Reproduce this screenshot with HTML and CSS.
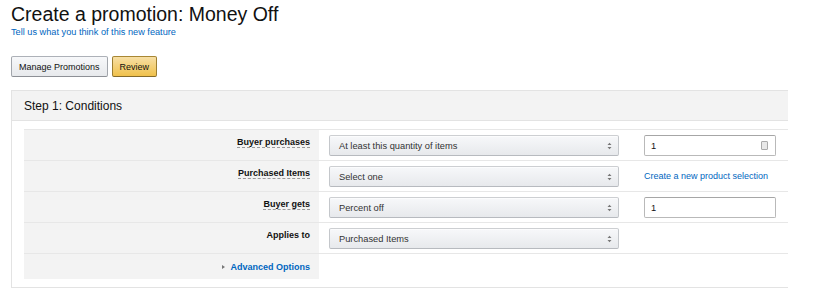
FILE: index.html
```html
<!DOCTYPE html>
<html>
<head>
<meta charset="utf-8">
<link rel="stylesheet" href="styles.css">
</head>
<body>
<div class="page">
  <h1 class="title">Create a promotion: Money Off</h1>
  <a class="feedback" href="#">Tell us what you think of this new feature</a>
  <div class="actions">
    <button class="btn">Manage Promotions</button>
    <button class="btn btn-primary">Review</button>
  </div>
  <section class="panel">
    <div class="panel-head">Step 1: Conditions</div>
    <div class="panel-body">
      <div class="form">
        <div class="row">
          <div class="label"><span class="hint">Buyer purchases</span></div>
          <div class="field">
            <div class="select"><span>At least this quantity of items</span><svg class="caret" width="5" height="8" viewBox="0 0 5 8"><path d="M0.5 3L2.5 0.8L4.5 3Z M0.5 5L2.5 7.2L4.5 5Z" fill="#777"/></svg></div>
            <div class="input"><span>1</span><span class="spin"></span></div>
          </div>
        </div>
        <div class="row">
          <div class="label"><span class="hint">Purchased Items</span></div>
          <div class="field">
            <div class="select"><span>Select one</span><svg class="caret" width="5" height="8" viewBox="0 0 5 8"><path d="M0.5 3L2.5 0.8L4.5 3Z M0.5 5L2.5 7.2L4.5 5Z" fill="#777"/></svg></div>
            <a class="link" href="#">Create a new product selection</a>
          </div>
        </div>
        <div class="row">
          <div class="label"><span class="hint">Buyer gets</span></div>
          <div class="field">
            <div class="select"><span>Percent off</span><svg class="caret" width="5" height="8" viewBox="0 0 5 8"><path d="M0.5 3L2.5 0.8L4.5 3Z M0.5 5L2.5 7.2L4.5 5Z" fill="#777"/></svg></div>
            <div class="input"><span>1</span></div>
          </div>
        </div>
        <div class="row">
          <div class="label"><span>Applies to</span></div>
          <div class="field">
            <div class="select"><span>Purchased Items</span><svg class="caret" width="5" height="8" viewBox="0 0 5 8"><path d="M0.5 3L2.5 0.8L4.5 3Z M0.5 5L2.5 7.2L4.5 5Z" fill="#777"/></svg></div>
          </div>
        </div>
        <div class="row row-last">
          <div class="label"><a class="adv" href="#"><span class="tri"></span>Advanced Options</a></div>
          <div class="field"></div>
        </div>
      </div>
    </div>
  </section>
</div>
</body>
</html>
```
FILE: styles.css
```css
* { box-sizing: border-box; }
body {
  margin: 0;
  background: #fff;
  font-family: "Liberation Sans", Arial, sans-serif;
  color: #111;
}
.page {
  padding: 2px 0 0 11px;
}
.title {
  margin: 0;
  font-size: 19.5px;
  line-height: 24px;
  font-weight: normal;
  color: #111;
}
.feedback {
  display: block;
  font-size: 9.2px;
  line-height: 12px;
  color: #0066c0;
  text-decoration: none;
}
.actions {
  display: flex;
  gap: 4px;
  margin-top: 18px;
}
.btn {
  height: 21px;
  padding: 0 7px;
  font-family: "Liberation Sans", Arial, sans-serif;
  font-size: 9px;
  color: #111;
  border: 1px solid #adb1b8;
  border-color: #adb1b8 #a2a6ac #8d9096;
  border-radius: 2px;
  background: linear-gradient(#f7f8fa, #e7e9ec);
}
.btn-primary {
  padding: 0 7px;
  border-color: #a88734 #9c7e31 #846a29;
  background: linear-gradient(#f7dfa5, #f0c14b);
}
.panel {
  width: 777px;
  margin-top: 13px;
  border: 1px solid #e3e3e3;
  border-right: none;
}
.panel-head {
  height: 30px;
  padding-left: 12px;
  display: flex;
  align-items: center;
  font-size: 12px;
  color: #111;
  background: #f3f3f3;
  border-bottom: 1px solid #e3e3e3;
}
.panel-body {
  padding: 8px 0 8px 12px;
}
.form {
  border-top: 1px solid #e7e7e7;
}
.row {
  display: grid;
  grid-template-columns: 295px 1fr;
  height: 31px;
  border-bottom: 1px solid #e7e7e7;
}
.row-last {
  height: 25px;
  border-bottom: none;
}
.label {
  background: #f3f3f3;
  text-align: right;
  padding: 6px 9px 0 0;
  font-size: 9px;
  font-weight: bold;
  color: #111;
  line-height: 12px;
}
.hint {
  border-bottom: 1px dashed #999;
}
.field {
  display: flex;
  align-items: flex-start;
  padding: 5px 0 0 10px;
  gap: 25px;
}
.select {
  width: 290px;
  height: 21px;
  display: flex;
  align-items: center;
  justify-content: space-between;
  padding: 0 6px 0 9px;
  font-size: 9.3px;
  color: #333;
  border: 1px solid #d5d9d9;
  border-color: #cdcfd2 #c4c7cb #b7babf;
  border-radius: 2px;
  background: linear-gradient(#f7f8fa, #e7e9ec);
  box-shadow: 0 1px 0 rgba(255,255,255,.6) inset;
}
.input {
  width: 132px;
  height: 21px;
  display: flex;
  align-items: center;
  justify-content: space-between;
  padding: 0 7px 0 6px;
  font-size: 9.3px;
  color: #111;
  border: 1px solid #b9b9b9;
  border-top-color: #a6a6a6;
  border-radius: 2px;
  background: #fff;
}
.spin {
  width: 7px;
  height: 9px;
  border: 1px solid #aaa;
  background: #e8e8e8;
  border-radius: 1px;
}
.link {
  font-size: 9px;
  line-height: 21px;
  color: #0066c0;
  text-decoration: none;
}
.adv {
  display: inline-flex;
  align-items: center;
  gap: 5px;
  color: #0066c0;
  text-decoration: none;
  font-weight: bold;
  padding-top: 1px;
}
.tri {
  width: 0;
  height: 0;
  border-left: 3px solid #777;
  border-top: 2.5px solid transparent;
  border-bottom: 2.5px solid transparent;
}
```
